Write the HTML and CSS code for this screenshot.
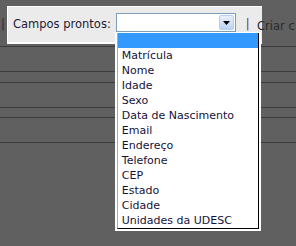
FILE: index.html
```html
<!DOCTYPE html>
<html lang="pt">
<head>
    <meta charset="UTF-8">
    <title>Campos prontos</title>
    <link rel="stylesheet" href="styles.css">
</head>
<body>
    <div class="page">
        <!-- barra de ferramentas com o campo em destaque -->
        <div class="toolbar">
            <div class="dim-left"><span class="sep sep-dim">|</span></div>
            <div class="focus">
                <span class="label">Campos prontos:</span>
                <div class="combo">
                    <div class="combo-field"></div>
                    <div class="combo-btn">
                        <svg width="7" height="4" viewBox="0 0 7 4"><path d="M0 0h7L3.5 4z" fill="#000"/></svg>
                    </div>
                    <div class="dropdown">
                        <ul class="dropdown-list">
                            <li class="selected">&nbsp;</li>
                            <li>Matrícula</li>
                            <li>Nome</li>
                            <li>Idade</li>
                            <li>Sexo</li>
                            <li>Data de Nascimento</li>
                            <li>Email</li>
                            <li>Endereço</li>
                            <li>Telefone</li>
                            <li>CEP</li>
                            <li>Estado</li>
                            <li>Cidade</li>
                            <li>Unidades da UDESC</li>
                        </ul>
                    </div>
                </div>
                <span class="sep">|</span>
            </div>
            <div class="dim-right"><span class="link-dim">Criar c</span></div>
        </div>

        <!-- linhas da tabela (escurecidas) -->
        <div class="rows">
            <div class="row row-top"></div>
            <div class="row row-tall"></div>
            <div class="row row-thin"></div>
            <div class="row row-tall"></div>
            <div class="row row-small"></div>
            <div class="row row-tall"></div>
        </div>
    </div>
</body>
</html>
```

FILE: styles.css
```css
body {
    margin: 0;
    background-color: #606060;
    font-family: "DejaVu Sans", Verdana, sans-serif;
}
.page {
    width: 296px;
    height: 246px;
    overflow: hidden;
}
.toolbar {
    display: flex;
    height: 38px;
}
.dim-left {
    width: 7px;
    padding-left: 1px;
    box-sizing: border-box;
    font-size: 11.5px;
    line-height: 19px;
    padding-top: 15px;
}
.sep {
    color: #7a2a6c;
    font-size: 11.5px;
}
.sep-dim {
    color: #3a1f38;
}
.focus {
    display: flex;
    align-items: flex-start;
    width: 255px;
    height: 38px;
    margin-top: 6px;
    box-sizing: border-box;
    padding: 6px 0 0 5px;
    background-color: #ebebeb;
    border-top: 1px solid #fff;
    border-left: 1px solid #fff;
    border-bottom: 2px solid #fff;
    white-space: nowrap;
    position: relative;
    z-index: 1;
}
.label, .focus .sep {
    font-size: 11.5px;
    line-height: 19px;
    margin-top: 2px;
    color: #1c1a36;
}
.focus .sep {
    color: #7a2a6c;
    margin-left: 10px;
}
.combo {
    position: relative;
    display: flex;
    width: 120px;
    height: 19px;
    margin-left: 5px;
    box-sizing: border-box;
    border: 1px solid #7f9db9;
    background-color: #fff;
}
.combo-field {
    flex: 1;
}
.combo-btn {
    width: 15px;
    margin: 1px 1px 1px 0;
    display: flex;
    align-items: center;
    justify-content: center;
    box-sizing: border-box;
    border: 1px solid #b8d0ef;
    border-radius: 2px;
    background: linear-gradient(#e6f0fc, #bcd4f4);
}
.dropdown {
    position: absolute;
    left: -2px;
    top: 18px;
    width: 146px;
    box-sizing: border-box;
    padding: 1px 2px 2px 2px;
    background-color: #fff;
}
.dropdown-list {
    list-style: none;
    margin: 0;
    padding: 0;
    border-left: 1px solid #a8a8a8;
    border-right: 1px solid #000;
    border-bottom: 1px solid #000;
}
.dropdown-list li {
    height: 15px;
    line-height: 15px;
    padding-left: 4px;
    font-size: 11px;
    color: #16123a;
    white-space: nowrap;
}
.dropdown-list li.selected {
    background-color: #3399ff;
}
.dim-right {
    flex: 1;
    white-space: nowrap;
    padding-top: 15px;
    position: relative;
    z-index: 2;
}
.link-dim {
    display: inline-block;
    margin-left: -5px;
    font-size: 11.5px;
    line-height: 19px;
    color: #2a2a2a;
}
.row {
    border-bottom: 1px solid #3c3c3c;
}
.row-top {
    height: 8px;
}
.row-tall {
    height: 24px;
}
.row-thin {
    height: 10px;
}
.row-small {
    height: 9px;
}
```
